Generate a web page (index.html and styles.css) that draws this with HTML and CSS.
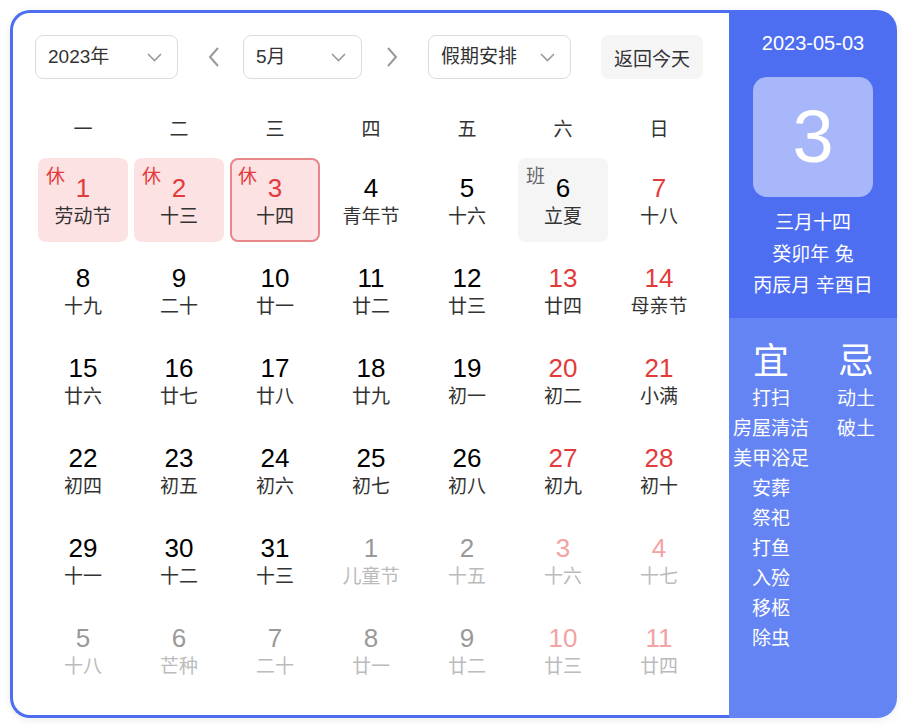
FILE: index.html
```html
<!DOCTYPE html>
<html lang="zh-CN">
<head>
<meta charset="utf-8">
<link rel="stylesheet" href="styles.css">
</head>
<body>
<div class="card">
  <div class="main">
    <div class="toolbar">
      <div class="select sel-year"><span>2023年</span><svg class="chev" width="15" height="9" viewBox="0 0 15 9"><path d="M1 1l6.5 6.5L14 1" fill="none" stroke="#999" stroke-width="1.6"/></svg></div>
      <svg class="arrow arrow-prev" width="12" height="20" viewBox="0 0 12 20"><path d="M10 1L2 10l8 9" fill="none" stroke="#999" stroke-width="2"/></svg>
      <div class="select sel-month"><span>5月</span><svg class="chev" width="15" height="9" viewBox="0 0 15 9"><path d="M1 1l6.5 6.5L14 1" fill="none" stroke="#999" stroke-width="1.6"/></svg></div>
      <svg class="arrow arrow-next" width="12" height="20" viewBox="0 0 12 20"><path d="M2 1l8 9-8 9" fill="none" stroke="#999" stroke-width="2"/></svg>
      <div class="select sel-holiday"><span>假期安排</span><svg class="chev" width="15" height="9" viewBox="0 0 15 9"><path d="M1 1l6.5 6.5L14 1" fill="none" stroke="#999" stroke-width="1.6"/></svg></div>
      <div class="today-btn">返回今天</div>
    </div>
    <div class="weekdays">
      <div>一</div><div>二</div><div>三</div><div>四</div><div>五</div><div>六</div><div>日</div>
    </div>
    <div class="days">
      <div class="day rest"><span class="tag">休</span><div class="num red">1</div><div class="lunar">劳动节</div></div>
      <div class="day rest"><span class="tag">休</span><div class="num red">2</div><div class="lunar">十三</div></div>
      <div class="day rest selected"><span class="tag">休</span><div class="num red">3</div><div class="lunar">十四</div></div>
      <div class="day"><div class="num">4</div><div class="lunar">青年节</div></div>
      <div class="day"><div class="num">5</div><div class="lunar">十六</div></div>
      <div class="day work"><span class="tag">班</span><div class="num">6</div><div class="lunar">立夏</div></div>
      <div class="day"><div class="num red">7</div><div class="lunar">十八</div></div>

      <div class="day"><div class="num">8</div><div class="lunar">十九</div></div>
      <div class="day"><div class="num">9</div><div class="lunar">二十</div></div>
      <div class="day"><div class="num">10</div><div class="lunar">廿一</div></div>
      <div class="day"><div class="num">11</div><div class="lunar">廿二</div></div>
      <div class="day"><div class="num">12</div><div class="lunar">廿三</div></div>
      <div class="day"><div class="num red">13</div><div class="lunar">廿四</div></div>
      <div class="day"><div class="num red">14</div><div class="lunar">母亲节</div></div>

      <div class="day"><div class="num">15</div><div class="lunar">廿六</div></div>
      <div class="day"><div class="num">16</div><div class="lunar">廿七</div></div>
      <div class="day"><div class="num">17</div><div class="lunar">廿八</div></div>
      <div class="day"><div class="num">18</div><div class="lunar">廿九</div></div>
      <div class="day"><div class="num">19</div><div class="lunar">初一</div></div>
      <div class="day"><div class="num red">20</div><div class="lunar">初二</div></div>
      <div class="day"><div class="num red">21</div><div class="lunar">小满</div></div>

      <div class="day"><div class="num">22</div><div class="lunar">初四</div></div>
      <div class="day"><div class="num">23</div><div class="lunar">初五</div></div>
      <div class="day"><div class="num">24</div><div class="lunar">初六</div></div>
      <div class="day"><div class="num">25</div><div class="lunar">初七</div></div>
      <div class="day"><div class="num">26</div><div class="lunar">初八</div></div>
      <div class="day"><div class="num red">27</div><div class="lunar">初九</div></div>
      <div class="day"><div class="num red">28</div><div class="lunar">初十</div></div>

      <div class="day"><div class="num">29</div><div class="lunar">十一</div></div>
      <div class="day"><div class="num">30</div><div class="lunar">十二</div></div>
      <div class="day"><div class="num">31</div><div class="lunar">十三</div></div>
      <div class="day other"><div class="num">1</div><div class="lunar">儿童节</div></div>
      <div class="day other"><div class="num">2</div><div class="lunar">十五</div></div>
      <div class="day other"><div class="num red">3</div><div class="lunar">十六</div></div>
      <div class="day other"><div class="num red">4</div><div class="lunar">十七</div></div>

      <div class="day other"><div class="num">5</div><div class="lunar">十八</div></div>
      <div class="day other"><div class="num">6</div><div class="lunar">芒种</div></div>
      <div class="day other"><div class="num">7</div><div class="lunar">二十</div></div>
      <div class="day other"><div class="num">8</div><div class="lunar">廿一</div></div>
      <div class="day other"><div class="num">9</div><div class="lunar">廿二</div></div>
      <div class="day other"><div class="num red">10</div><div class="lunar">廿三</div></div>
      <div class="day other"><div class="num red">11</div><div class="lunar">廿四</div></div>
    </div>
  </div>
  <div class="side">
    <div class="side-top">
      <div class="side-date">2023-05-03</div>
      <div class="big-day">3</div>
      <div class="side-lunar">
        <div>三月十四</div>
        <div>癸卯年 兔</div>
        <div>丙辰月 辛酉日</div>
      </div>
    </div>
    <div class="side-bottom">
      <div class="col col-yi">
        <div class="col-head">宜</div>
        <div>打扫</div>
        <div>房屋清洁</div>
        <div>美甲浴足</div>
        <div>安葬</div>
        <div>祭祀</div>
        <div>打鱼</div>
        <div>入殓</div>
        <div>移柩</div>
        <div>除虫</div>
      </div>
      <div class="col col-ji">
        <div class="col-head">忌</div>
        <div>动土</div>
        <div>破土</div>
      </div>
    </div>
  </div>
</div>
</body>
</html>
```

FILE: styles.css
```css
* { box-sizing: border-box; }
html, body { margin: 0; padding: 0; background: #fff; }
body {
  padding: 10px;
  font-family: "Liberation Sans", "Noto Sans CJK SC", sans-serif;
  color: #333;
}
.card {
  display: flex;
  width: 887px;
  height: 708px;
  border-radius: 20px;
  box-shadow: 0 2px 8px rgba(0, 0, 0, 0.08);
}
.main {
  flex: 0 0 719px;
  border: 3px solid #4e6ef2;
  border-right: 0;
  border-radius: 20px 0 0 20px;
  padding: 22px 0 0 22px;
  background: #fff;
}
.toolbar {
  display: flex;
  align-items: center;
  height: 44px;
}
.select {
  height: 44px;
  border: 1px solid #dcdcdc;
  border-radius: 8px;
  display: flex;
  align-items: center;
  justify-content: space-between;
  padding: 0 15px 0 12px;
  font-size: 19px;
  line-height: 24px;
  color: #333;
}
.sel-year { width: 143px; }
.sel-month { width: 119px; margin-left: 23px; }
.sel-holiday { width: 143px; margin-left: 30px; }
.arrow { display: block; }
.arrow-prev { margin-left: 30px; }
.arrow-next { margin-left: 24px; }
.today-btn {
  margin-left: 30px;
  width: 102px;
  height: 44px;
  border-radius: 8px;
  background: #f5f5f6;
  display: flex;
  align-items: center;
  justify-content: center;
  font-size: 19px;
  color: #333;
}
.weekdays {
  display: grid;
  grid-template-columns: repeat(7, 90px);
  column-gap: 6px;
  margin: 33px 0 0 3px;
  height: 36px;
  line-height: 36px;
  font-size: 19px;
  text-align: center;
  color: #333;
}
.days {
  display: grid;
  grid-template-columns: repeat(7, 90px);
  grid-auto-rows: 84px;
  gap: 6px;
  margin: 10px 0 0 3px;
}
.day {
  position: relative;
  border-radius: 8px;
  display: flex;
  flex-direction: column;
  align-items: center;
  justify-content: center;
  text-align: center;
  padding-top: 2px;
}
.day.rest { background: #fde2e4; }
.day.work { background: #f5f5f6; }
.day.selected { border: 2px solid #e8868a; }
.num {
  font-size: 26px;
  line-height: 30px;
  color: #000;
}
.num.red { color: #e33b3b; }
.lunar {
  font-size: 19px;
  line-height: 26px;
  margin-top: 1px;
  color: #333;
}
.tag {
  position: absolute;
  top: 8px;
  left: 8px;
  font-size: 19px;
  line-height: 22px;
  color: #e33b3b;
}
.work .tag { color: #666; }
.selected .tag { top: 6px; left: 6px; }
.day.other .num { color: #999; }
.day.other .num.red { color: #f2a3a3; }
.day.other .lunar { color: #bbb; }

.side {
  flex: 0 0 168px;
  border-radius: 0 20px 20px 0;
  overflow: hidden;
  display: flex;
  flex-direction: column;
  color: #fff;
}
.side-top {
  background: #4e6ef2;
  height: 308px;
  display: flex;
  flex-direction: column;
  align-items: center;
  padding-top: 18px;
}
.side-date {
  font-size: 20px;
  line-height: 30px;
}
.big-day {
  margin-top: 19px;
  width: 120px;
  height: 120px;
  border-radius: 14px;
  background: #a7b7f9;
  display: flex;
  align-items: center;
  justify-content: center;
  font-size: 74px;
  line-height: 1;
}
.side-lunar {
  margin-top: 10px;
  text-align: center;
  font-size: 19px;
  line-height: 31.5px;
}
.side-bottom {
  flex: 1;
  background: #6584f3;
  display: flex;
  padding: 22px 0 0 2px;
  gap: 25px;
}
.col {
  text-align: center;
  font-size: 19px;
  line-height: 30px;
}
.col-yi { width: 80px; }
.col-ji { width: 40px; }
.col-head {
  font-size: 36px;
  line-height: 44px;
}
```
